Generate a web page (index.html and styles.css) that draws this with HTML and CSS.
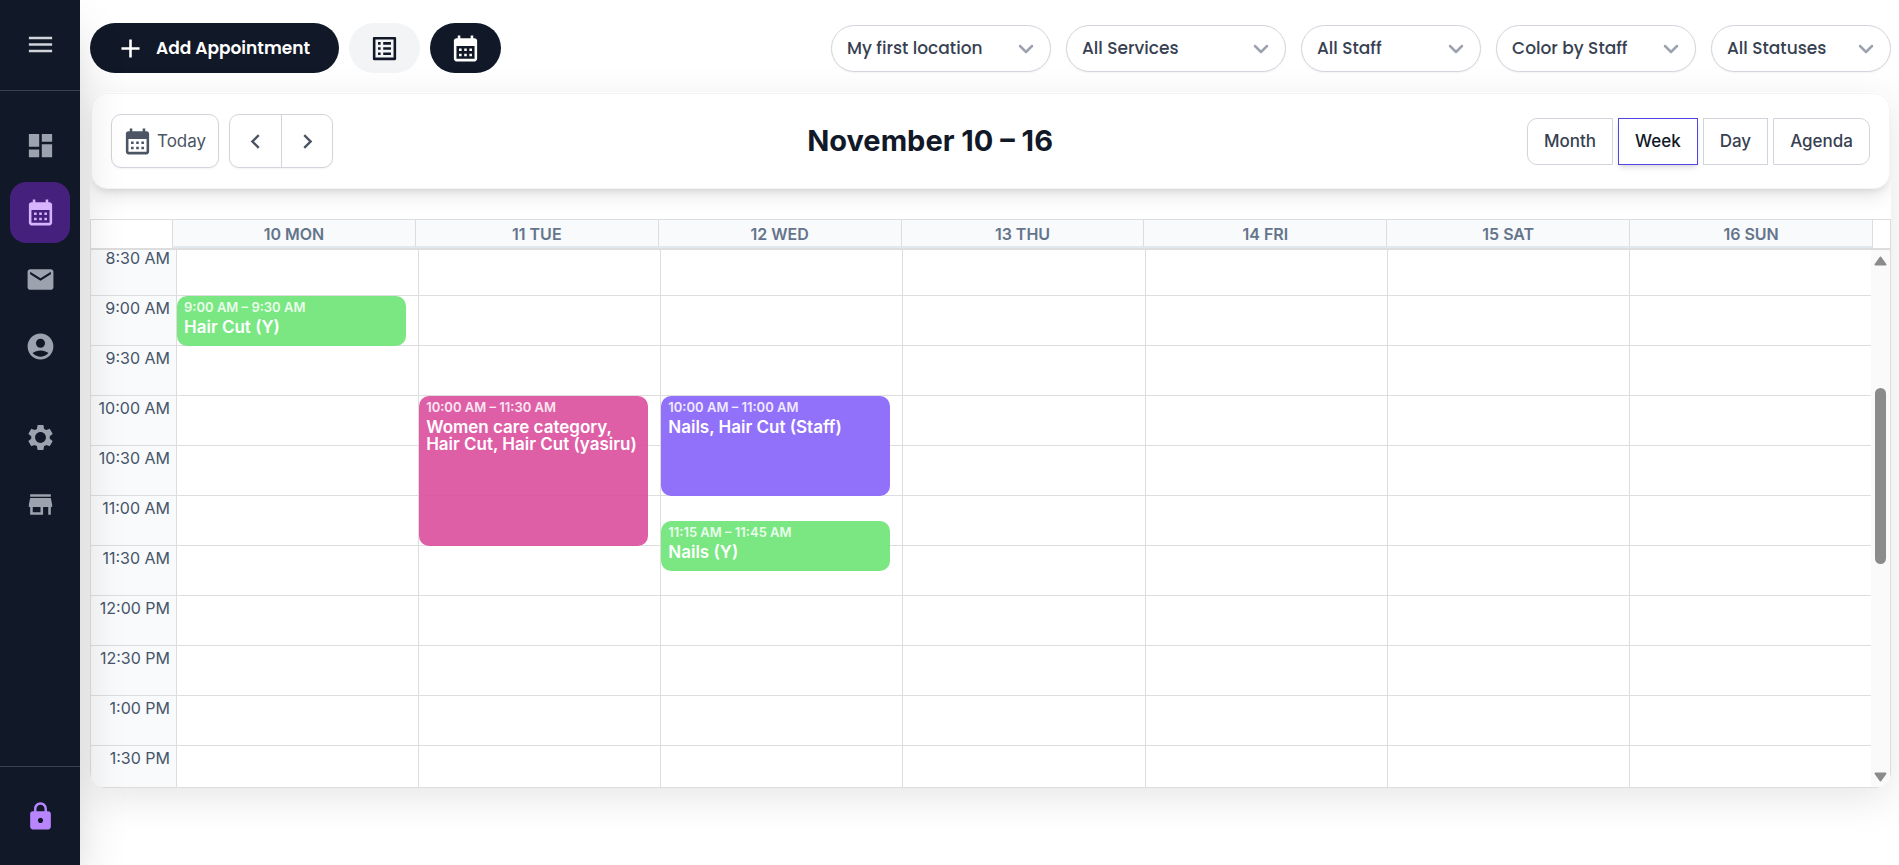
FILE: index.html
```html
<!DOCTYPE html>
<html lang="en">
<head>
<meta charset="utf-8">
<meta name="viewport" content="width=device-width, initial-scale=1">
<title>Appointments</title>
<link rel="stylesheet" href="styles.css">
</head>
<body>
<svg class="sprite" aria-hidden="true">
  <symbol id="i-menu" viewBox="0 0 24 24"><path d="M3 18h18v-2H3v2zm0-5h18v-2H3v2zm0-7v2h18V6H3z"/></symbol>
  <symbol id="i-dash" viewBox="0 0 24 24"><path d="M3 13h8V3H3v10zm0 8h8v-6H3v6zm10 0h8V11h-8v10zm0-18v6h8V3h-8z"/></symbol>
  <symbol id="i-cal" viewBox="0 0 24 24"><path d="M19 4h-1V2h-2v2H8V2H6v2H5c-1.11 0-1.99.9-1.99 2L3 20c0 1.1.89 2 2 2h14c1.1 0 2-.9 2-2V6c0-1.1-.9-2-2-2zm0 16H5V10h14v10zM9 14H7v-2h2v2zm4 0h-2v-2h2v2zm4 0h-2v-2h2v2zm-8 4H7v-2h2v2zm4 0h-2v-2h2v2zm4 0h-2v-2h2v2z"/></symbol>
  <symbol id="i-mail" viewBox="0 0 24 24"><path d="M20 4H4c-1.1 0-1.99.9-1.99 2L2 18c0 1.1.9 2 2 2h16c1.1 0 2-.9 2-2V6c0-1.1-.9-2-2-2zm0 4l-8 5-8-5V6l8 5 8-5v2z"/></symbol>
  <symbol id="i-user" viewBox="0 0 24 24"><path d="M12 2C6.48 2 2 6.48 2 12s4.48 10 10 10 10-4.480 10-10S17.52 2 12 2zm0 4c1.930 0 3.500 1.570 3.500 3.500S13.930 13 12 13s-3.500-1.570-3.500-3.500S10.070 6 12 6zm0 14c-2.030 0-4.430-.820-6.140-2.880C7.550 15.800 9.680 15 12 15s4.450.800 6.140 2.120C16.430 19.180 14.030 20 12 20z"/></symbol>
  <symbol id="i-gear" viewBox="0 0 24 24"><path d="M19.140 12.940c.040-.300.060-.610.060-.940 0-.320-.020-.640-.070-.940l2.030-1.580c.180-.140.230-.410.120-.610l-1.920-3.320c-.120-.220-.370-.290-.590-.220l-2.390.960c-.500-.380-1.030-.700-1.620-.940l-.360-2.540c-.040-.240-.240-.410-.480-.410h-3.840c-.240 0-.430.170-.470.410l-.360 2.540c-.590.240-1.130.570-1.620.940l-2.390-.960c-.220-.080-.470 0-.590.220L2.740 8.870c-.120.210-.080.470.120.610l2.030 1.580c-.050.300-.090.630-.090.940s.020.640.070.940l-2.030 1.580c-.180.140-.230.410-.120.610l1.920 3.320c.120.220.370.290.590.220l2.390-.960c.500.380 1.030.700 1.620.940l.360 2.540c.050.240.240.410.480.410h3.840c.240 0 .440-.170.470-.410l.360-2.540c.590-.240 1.130-.560 1.620-.940l2.390.960c.220.080.470 0 .590-.220l1.920-3.320c.120-.220.070-.470-.120-.610l-2.010-1.580zM12 16.200c-2.310 0-4.200-1.890-4.200-4.200s1.890-4.200 4.200-4.200 4.200 1.890 4.200 4.200-1.890 4.200-4.200 4.200z"/></symbol>
  <symbol id="i-store" viewBox="0 0 24 24"><path d="M20 4H4v2h16V4zm1 10v-2l-1-5H4l-1 5v2h1v6h10v-6h4v6h2v-6h1zm-9 4H6v-4h6v4z"/></symbol>
  <symbol id="i-lock" viewBox="0 0 24 24"><path d="M18 8h-1V6c0-2.760-2.240-5-5-5S7 3.240 7 6v2H6c-1.100 0-2 .900-2 2v10c0 1.100.900 2 2 2h12c1.100 0 2-.900 2-2V10c0-1.100-.900-2-2-2zm-6 9c-1.100 0-2-.900-2-2s.900-2 2-2 2 .900 2 2-.900 2-2 2zm3.100-9H8.900V6c0-1.710 1.390-3.100 3.100-3.100 1.710 0 3.100 1.390 3.100 3.100v2z"/></symbol>
  <symbol id="i-plus" viewBox="0 0 24 24"><path d="M19 13h-6v6h-2v-6H5v-2h6V5h2v6h6v2z"/></symbol>
  <symbol id="i-list" viewBox="0 0 24 24"><path d="M19 5v14H5V5h14m1.100-2H3.900c-.500 0-.900.400-.900.900v16.200c0 .400.400.900.900.900h16.200c.400 0 .900-.500.900-.900V3.900c0-.500-.500-.900-.900-.900zM11 7h6v2h-6V7zm0 4h6v2h-6v-2zm0 4h6v2h-6zM7 7h2v2H7zm0 4h2v2H7zm0 4h2v2H7z"/></symbol>
  <symbol id="i-left" viewBox="0 0 24 24"><path d="M15.410 7.410L14 6l-6 6 6 6 1.410-1.410L10.830 12z"/></symbol>
  <symbol id="i-right" viewBox="0 0 24 24"><path d="M10 6L8.590 7.410 13.170 12l-4.580 4.590L10 18l6-6z"/></symbol>
  <symbol id="i-down" viewBox="0 0 24 24"><path d="M6 9l6 6 6-6" fill="none" stroke="currentColor" stroke-width="2.500" stroke-linecap="round" stroke-linejoin="round"/></symbol>
</svg>

<div class="app">
  <aside class="sidebar">
    <div class="side-top">
      <button class="side-btn menu" aria-label="Menu"><svg class="icon"><use href="#i-menu"/></svg></button>
    </div>
    <nav class="side-nav" aria-label="Main">
      <a class="side-btn" href="#dashboard" aria-label="Dashboard"><svg class="icon"><use href="#i-dash"/></svg></a>
      <a class="side-btn active" href="#calendar" aria-label="Calendar"><svg class="icon"><use href="#i-cal"/></svg></a>
      <a class="side-btn" href="#messages" aria-label="Messages"><svg class="icon"><use href="#i-mail"/></svg></a>
      <a class="side-btn" href="#clients" aria-label="Clients"><svg class="icon"><use href="#i-user"/></svg></a>
      <a class="side-btn group" href="#settings" aria-label="Settings"><svg class="icon"><use href="#i-gear"/></svg></a>
      <a class="side-btn" href="#store" aria-label="Store"><svg class="icon"><use href="#i-store"/></svg></a>
    </nav>
    <div class="side-bottom">
      <button class="side-btn lock" aria-label="Lock"><svg class="icon"><use href="#i-lock"/></svg></button>
    </div>
  </aside>

  <main class="main">
    <header class="topbar">
      <div class="actions">
        <button class="pill add"><svg class="icon"><use href="#i-plus"/></svg>Add Appointment</button>
        <button class="pill light" aria-label="List view"><svg class="icon"><use href="#i-list"/></svg></button>
        <button class="pill" aria-label="Calendar view"><svg class="icon"><use href="#i-cal"/></svg></button>
      </div>
      <div class="filters">
        <div class="filter wide"><select aria-label="Location"><option>My first location</option></select><svg class="caret"><use href="#i-down"/></svg></div>
        <div class="filter wide"><select aria-label="Services"><option>All Services</option></select><svg class="caret"><use href="#i-down"/></svg></div>
        <div class="filter"><select aria-label="Staff"><option>All Staff</option></select><svg class="caret"><use href="#i-down"/></svg></div>
        <div class="filter medium"><select aria-label="Color"><option>Color by Staff</option></select><svg class="caret"><use href="#i-down"/></svg></div>
        <div class="filter"><select aria-label="Statuses"><option>All Statuses</option></select><svg class="caret"><use href="#i-down"/></svg></div>
      </div>
    </header>

    <section class="calendar">
      <div class="toolbar">
        <div class="nav-group">
          <button class="today"><svg class="icon"><use href="#i-cal"/></svg>Today</button>
          <div class="arrows">
            <button aria-label="Previous week"><svg class="icon"><use href="#i-left"/></svg></button>
            <button aria-label="Next week"><svg class="icon"><use href="#i-right"/></svg></button>
          </div>
        </div>
        <h1>November 10 – 16</h1>
        <div class="views">
          <button>Month</button>
          <button class="selected">Week</button>
          <button>Day</button>
          <button>Agenda</button>
        </div>
      </div>

      <div class="week">
        <div class="days">
          <div class="corner"></div>
          <div class="day">10 MON</div>
          <div class="day">11 TUE</div>
          <div class="day">12 WED</div>
          <div class="day">13 THU</div>
          <div class="day">14 FRI</div>
          <div class="day">15 SAT</div>
          <div class="day">16 SUN</div>
          <div class="corner-end"></div>
        </div>
        <div class="body">
          <div class="grid">
            <div class="times">
              <div>8:30 AM</div>
              <div>9:00 AM</div>
              <div>9:30 AM</div>
              <div>10:00 AM</div>
              <div>10:30 AM</div>
              <div>11:00 AM</div>
              <div>11:30 AM</div>
              <div>12:00 PM</div>
              <div>12:30 PM</div>
              <div>1:00 PM</div>
              <div>1:30 PM</div>
            </div>
            <div class="col">
              <article class="event green" style="top:50px;height:50px"><time>9:00 AM – 9:30 AM</time><p>Hair Cut (Y)</p></article>
            </div>
            <div class="col">
              <article class="event pink" style="top:150px;height:150px"><time>10:00 AM – 11:30 AM</time><p>Women care category, Hair Cut, Hair Cut (yasiru)</p></article>
            </div>
            <div class="col">
              <article class="event violet" style="top:150px;height:100px"><time>10:00 AM – 11:00 AM</time><p>Nails, Hair Cut (Staff)</p></article>
              <article class="event green" style="top:275px;height:50px"><time>11:15 AM – 11:45 AM</time><p>Nails (Y)</p></article>
            </div>
            <div class="col"></div>
            <div class="col"></div>
            <div class="col"></div>
            <div class="col"></div>
          </div>
          <div class="scrollbar" aria-hidden="true">
            <svg viewBox="0 0 13 10"><path d="M6.500 1.500L11.500 8.500H1.500z"/></svg>
            <div class="track"><div class="thumb"></div></div>
            <svg viewBox="0 0 13 10"><path d="M6.500 8.500L11.500 1.500H1.500z"/></svg>
          </div>
        </div>
      </div>
    </section>
  </main>
</div>
</body>
</html>
```
FILE: styles.css
```css
* { box-sizing: border-box; }

body {
  margin: 0;
  background: #fff;
  color: #111827;
  font-family: Inter, "Liberation Sans", sans-serif;
  font-size: 17px;
}

button, select { font: inherit; color: inherit; cursor: pointer; }
button { padding: 0; border: 0; background: none; }
.sprite { position: absolute; width: 0; height: 0; }
.icon { width: 31px; height: 31px; fill: currentColor; flex: none; }

.app { display: flex; height: 100vh; overflow: hidden; }

/* Sidebar */
.sidebar {
  position: relative;
  z-index: 2;
  display: flex;
  flex-direction: column;
  flex: none;
  width: 80px;
  background: #111827;
  color: #9ca3af;
  box-shadow: 0 26px 54px -12px rgba(0, 0, 0, 0.25);
}
.side-top { padding: 14px 10px 15px; border-bottom: 1px solid #374151; }
.side-nav { display: flex; flex-direction: column; gap: 6px; flex: 1; padding: 24px 10px; }
.side-btn {
  display: flex;
  align-items: center;
  justify-content: center;
  width: 60px;
  height: 61px;
  border-radius: 16px;
  color: #9ca3af;
}
.side-btn.menu { color: #d1d5db; }
.side-btn.active { background: #45207c; color: #d8b4fe; }
.side-btn.group { margin-top: 24px; }
.side-btn.lock { color: #b885ff; }
.side-bottom { padding: 19px 10px 18px; border-top: 1px solid #374151; }

/* Top bar */
.main { display: flex; flex-direction: column; flex: 1; min-width: 0; padding: 23px 8px 77px 10px; }
.topbar { display: flex; align-items: center; justify-content: space-between; gap: 20px; }
.actions { display: flex; gap: 10px; }
.pill {
  display: flex;
  align-items: center;
  justify-content: center;
  gap: 10px;
  height: 50px;
  padding: 0 20px;
  border-radius: 25px;
  background: #111827;
  color: #fff;
  min-width: 70px;
}
.pill.add {
  padding: 0 29px 0 25px;
  font-family: Poppins, Inter, sans-serif;
  font-weight: 600;
  white-space: nowrap;
}
.pill.light { background: #f3f4f6; color: #111827; }
.filters { display: flex; gap: 15px; }
.filter { position: relative; width: 180px; color: #374151; font-family: Poppins, Inter, sans-serif; font-weight: 500; }
.filter.medium { width: 200px; }
.filter.wide { width: 220px; }
.filter select {
  appearance: none;
  width: 100%;
  height: 47px;
  padding: 0 40px 0 15px;
  border: 1px solid #d1d5db;
  border-radius: 24px;
  background: #fff;
  box-shadow: 0 1px 2px rgba(0, 0, 0, 0.05);
}
.caret {
  position: absolute;
  top: 12px;
  right: 13px;
  width: 24px;
  height: 24px;
  color: #9ca3af;
  pointer-events: none;
}

/* Calendar */
.calendar {
  display: flex;
  flex-direction: column;
  flex: 1;
  min-height: 0;
  margin-top: 19px;
  padding-top: 1px;
  overflow: hidden;
  border-radius: 16px;
  background: #fff;
  box-shadow: 0 10px 40px rgba(0, 0, 0, 0.1);
}
.toolbar {
  display: flex;
  align-items: center;
  justify-content: space-between;
  margin: 0 1px 30px;
  padding: 20px 19px;
  border: 1px solid #f3f4f6;
  border-radius: 16px;
  background: #fff;
  box-shadow: 0 10px 20px -3px rgba(0, 0, 0, 0.1), 0 4px 8px -4px rgba(0, 0, 0, 0.15);
}
.toolbar h1 { margin: 0; font-size: 29px; line-height: 36px; font-weight: 700; }
.nav-group { display: flex; gap: 10px; color: #4b5563; }
.today, .arrows {
  display: flex;
  align-items: center;
  height: 54px;
  border: 1px solid #d1d5db;
  border-radius: 10px;
  background: #fff;
  box-shadow: 0 1px 2px rgba(0, 0, 0, 0.05);
}
.today { gap: 4px; padding: 0 12px 0 10px; }
.arrows button { display: flex; align-items: center; justify-content: center; width: 51px; height: 100%; }
.arrows button + button { border-left: 1px solid #d1d5db; }
.arrows .icon { width: 29px; height: 29px; }
.views { display: flex; gap: 5px; color: #374151; font-weight: 500; }
.views button { height: 47px; padding: 0 16px; border: 1px solid #d1d5db; background: #fff; }
.views button:first-child { border-radius: 10px 0 0 10px; }
.views button:last-child { border-radius: 0 10px 10px 0; }
.views .selected {
  border-color: #4f46e5;
  color: #111827;
  box-shadow: 0 4px 6px -1px rgba(0, 0, 0, 0.1), 0 2px 4px -2px rgba(0, 0, 0, 0.1);
}

.week { display: flex; flex-direction: column; flex: 1; min-height: 0; border: 1px solid #ddd; }
.days { display: flex; border-bottom: 2px solid #ddd; }
.corner { width: 81px; }
.day {
  flex: 1;
  height: 28px;
  border-left: 1px solid #ddd;
  border-bottom: 2px solid #e2e8f0;
  background: #f8fafc;
  color: #64748b;
  font-size: 16px;
  line-height: 28px;
  font-weight: 600;
  text-align: center;
}
.corner-end { width: 18px; border-left: 1px solid #ddd; }
.body { display: flex; flex: 1; min-height: 0; overflow: hidden; }
.grid { display: flex; flex: 1; margin-top: -4px; }
.times { width: 85px; background: #f8fafc; color: #475569; font-size: 16px; text-align: right; }
.times div { height: 50px; padding: 4px 6px 0 0; border-bottom: 1px solid #ddd; line-height: 16px; }
.col {
  position: relative;
  flex: 1;
  border-left: 1px solid #ddd;
  background: repeating-linear-gradient(#fff 0 49px, #ddd 49px 50px);
}
.event {
  position: absolute;
  left: 0;
  width: 95%;
  padding: 4px 7px;
  border-radius: 10px;
  color: #fff;
  overflow: hidden;
}
.event time { display: block; font-size: 13px; line-height: 15px; font-weight: 600; opacity: 0.85; }
.event p { margin: 4px 0 0; font-size: 17px; line-height: 17px; font-weight: 600; }
.green { background: rgba(112, 229, 122, 0.93); }
.pink { background: rgba(219, 78, 157, 0.9); }
.violet { background: rgba(139, 104, 250, 0.94); }

.scrollbar {
  display: flex;
  flex-direction: column;
  align-items: center;
  width: 19px;
  padding: 6px 0 5px;
  background: #fafafa;
}
.scrollbar svg { width: 13px; height: 10px; fill: #8b8b8b; stroke: #8b8b8b; stroke-width: 2; stroke-linejoin: round; }
.track { flex: 1; width: 11px; padding-top: 122px; }
.thumb { height: 176px; border-radius: 6px; background: #8b8b8b; }
```
